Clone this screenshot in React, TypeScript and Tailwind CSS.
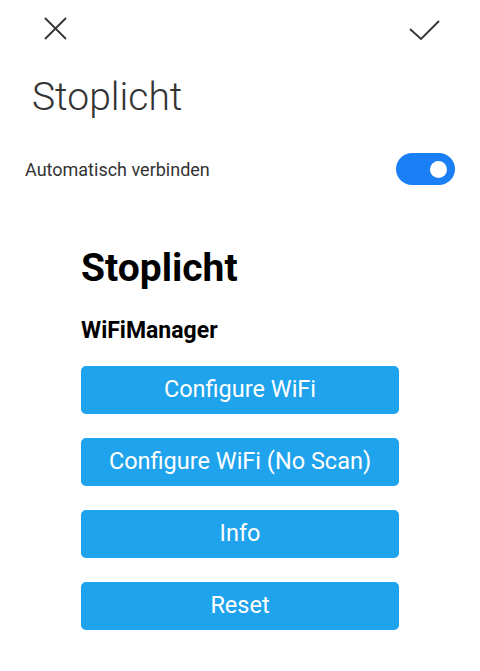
const buttons = ["Configure WiFi", "Configure WiFi (No Scan)", "Info", "Reset"];

export default function App() {
  return (
    <div className="w-[480px] h-[671px] bg-white overflow-hidden font-['Roboto',sans-serif]">
      <div className="flex items-start justify-between pl-[44px] pr-[40px] pt-[17px]">
        <svg width="23" height="23" viewBox="0 0 23 23" className="text-[#333]">
          <path d="M1 1 L22 22 M22 1 L1 22" stroke="currentColor" strokeWidth="1.8" fill="none" />
        </svg>
        <svg width="31" height="22" viewBox="0 0 31 22" className="text-[#333] mt-[2px]">
          <path d="M1 10 L12 20 L30 2" stroke="currentColor" strokeWidth="1.8" fill="none" />
        </svg>
      </div>
      <h1 className="pl-[32px] mt-[32px] text-[39px] leading-[48px] font-light text-[#333]">Stoplicht</h1>
      <div className="flex items-center justify-between pl-[25px] pr-[25px] mt-[32px]">
        <span className="text-[18px] text-[#333]">Automatisch verbinden</span>
        <div className="w-[59px] h-[32px] rounded-full bg-[#1a7ff5] flex items-center justify-end pr-[8px]">
          <div className="w-[17px] h-[17px] rounded-full bg-white" />
        </div>
      </div>
      <div className="pl-[81px] pr-[81px] mt-[60px]">
        <h2 className="text-[39px] leading-[46px] font-bold text-black">Stoplicht</h2>
        <h3 className="mt-[26px] text-[23px] leading-[28px] font-bold text-black">WiFiManager</h3>
        <div className="flex flex-col gap-[24px] mt-[21px]">
          {buttons.map((b) => (
            <button
              key={b}
              className="h-[48px] w-full rounded-[5px] bg-[#1fa3ec] text-white text-[23.5px]"
            >
              {b}
            </button>
          ))}
        </div>
      </div>
    </div>
  );
}
